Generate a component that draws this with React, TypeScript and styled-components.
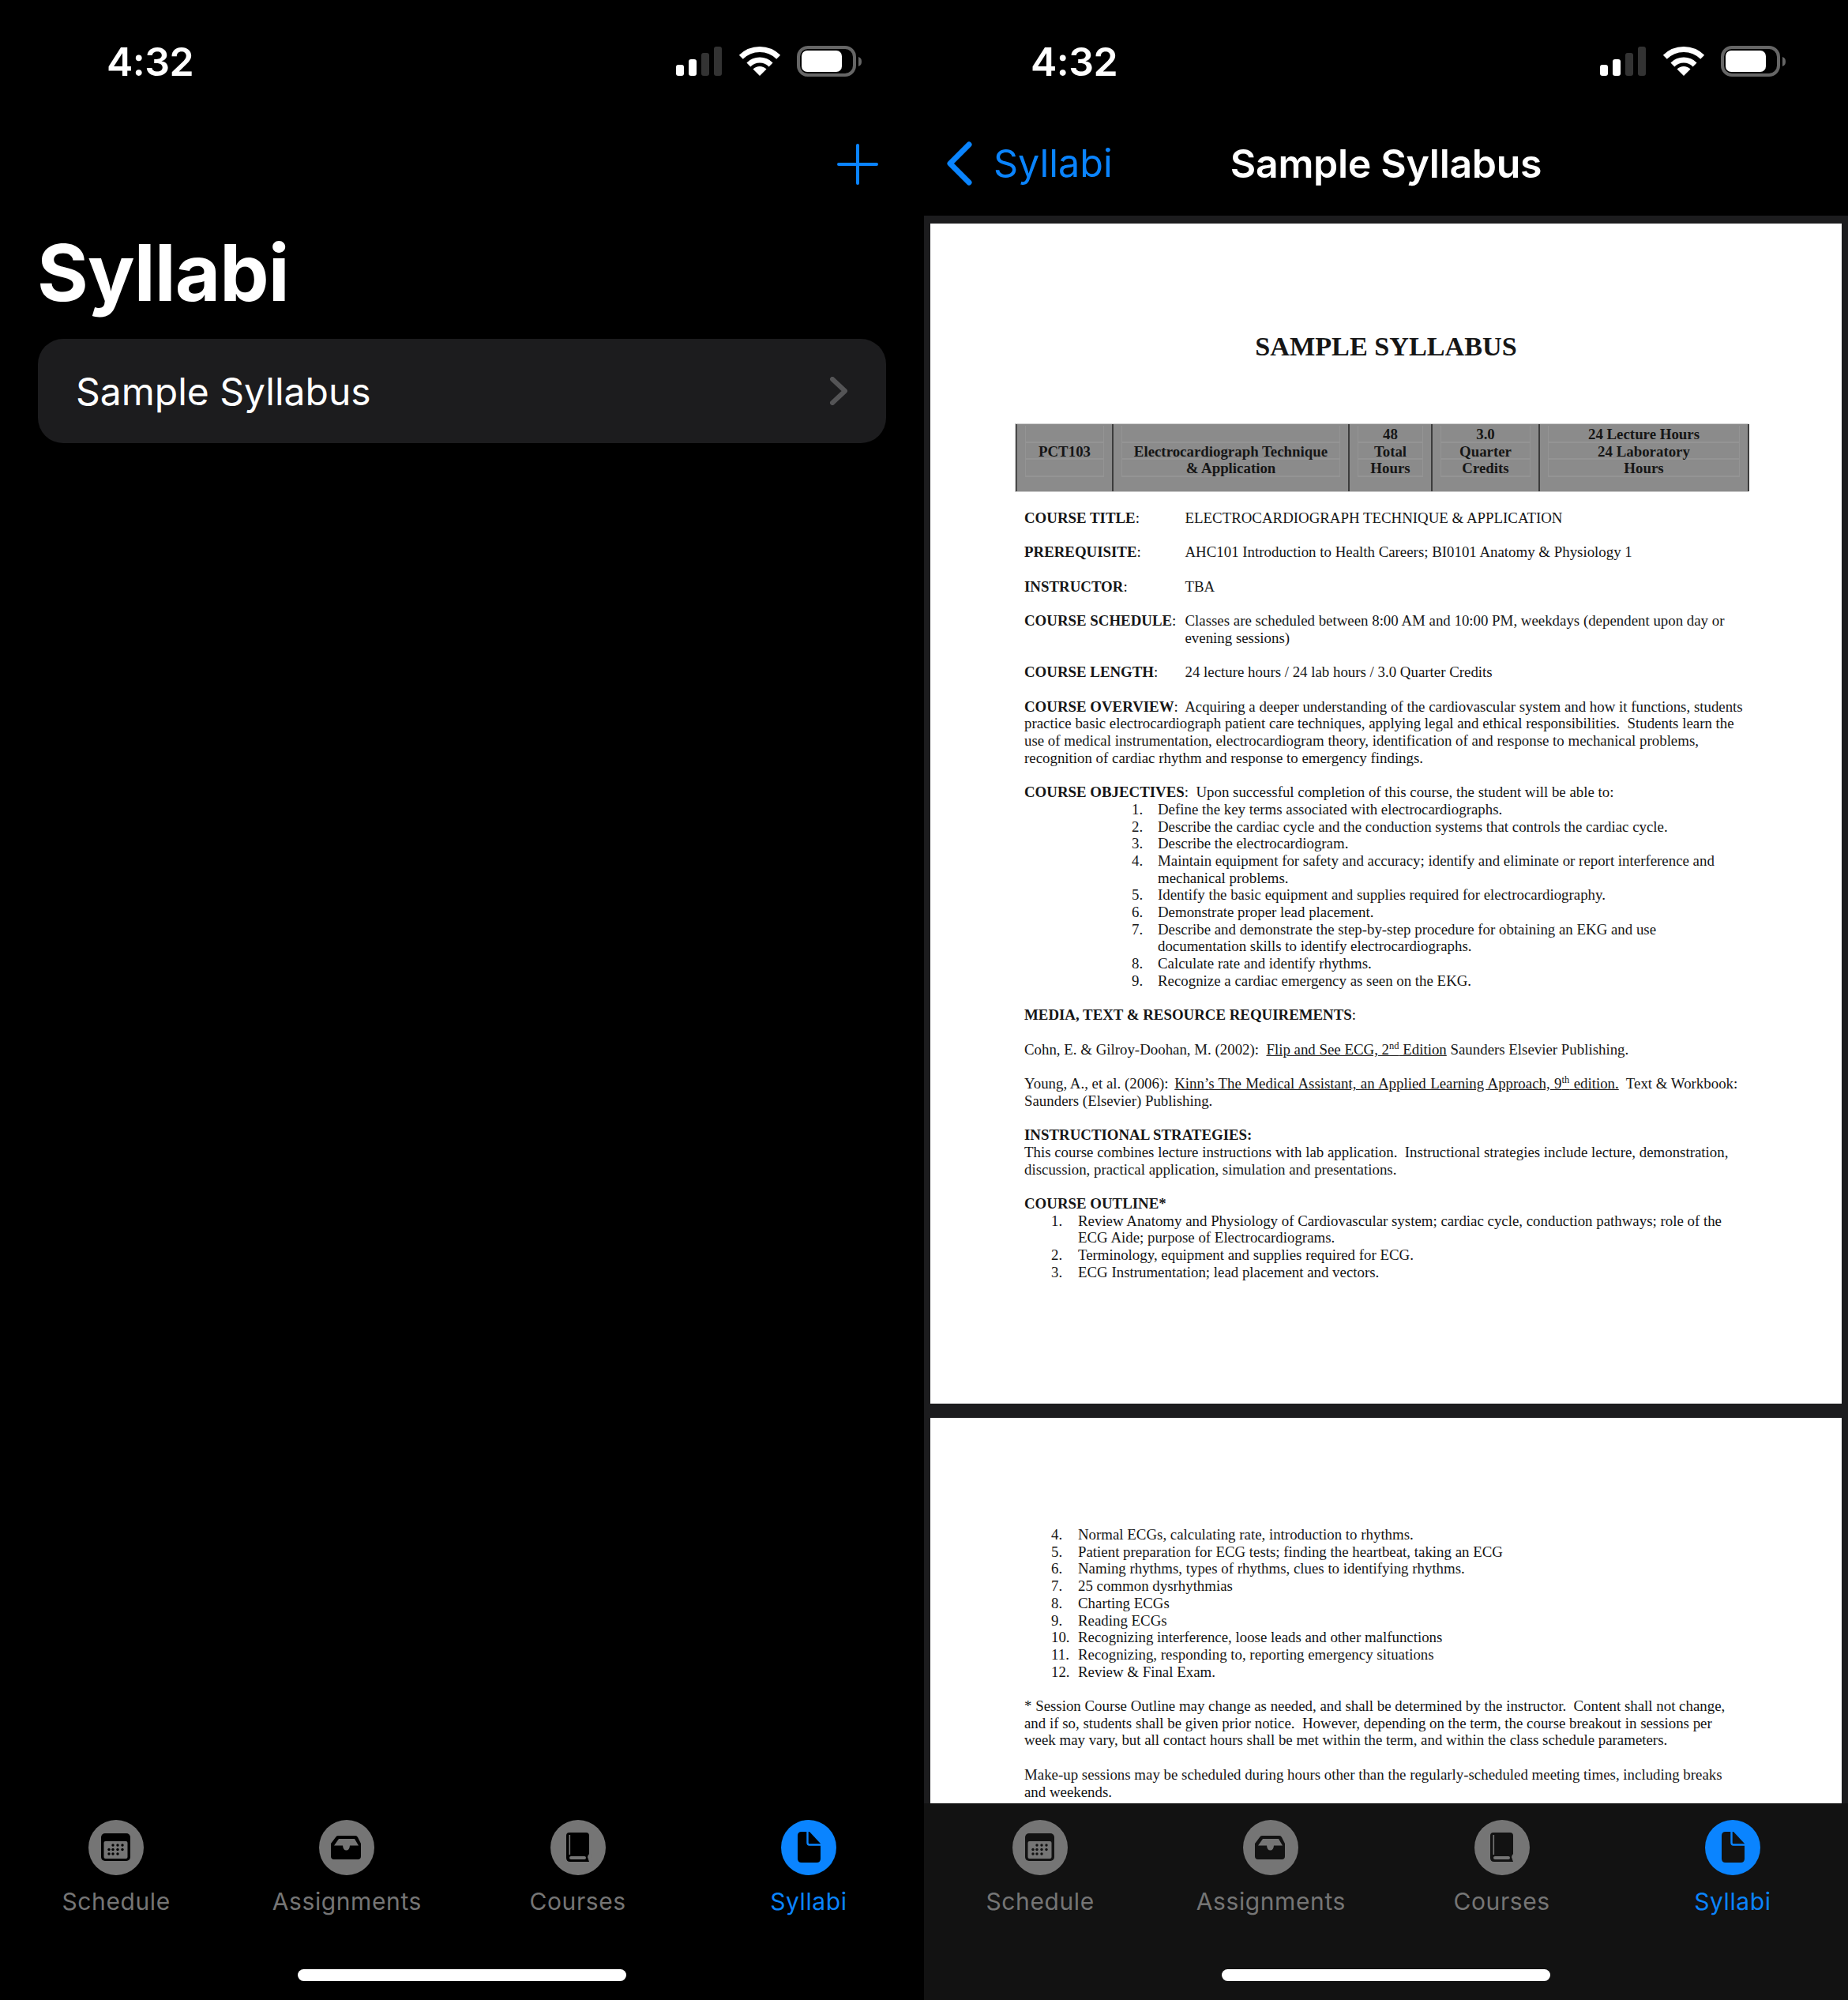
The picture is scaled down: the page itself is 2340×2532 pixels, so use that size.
import React from 'react';
import styled, { createGlobalStyle } from 'styled-components';

const BLUE = '#0a84ff';
const GREY = '#757575';
const SANS = 'Inter, "Liberation Sans", sans-serif';
const SERIF = '"Liberation Serif", "Times New Roman", serif';

const GlobalStyle = createGlobalStyle`
    * { box-sizing: border-box; }
    html, body { margin: 0; padding: 0; background: #000; }
`;

/* Shell */
const Screens = styled.div`
    display: grid;
    grid-template-columns: 1170px 1170px;
    width: 2340px;
    height: 2532px;
    background: #000;
    overflow: hidden;
`;

const Screen = styled.section`
    display: flex;
    flex-direction: column;
    height: 2532px;
    min-width: 0;
    color: #fff;
    font-family: ${SANS};
`;

const StatusBar = styled.div`
    display: flex;
    justify-content: space-between;
    align-items: flex-start;
    height: 97px;
    padding: 58px 78px 0 135px;
`;

const Time = styled.span`
    font-size: 50px;
    font-weight: 600;
    line-height: 40px;
    letter-spacing: -0.5px;
`;

const NavBar = styled.header`
    height: 176px;
    padding: 77px 58px 33px 28px;
`;

const PlusRow = styled(NavBar)`
    display: flex;
    justify-content: flex-end;
    padding-top: 85px;
`;

const DetailNav = styled(NavBar)`
    display: grid;
    grid-template-columns: 1fr auto 1fr;
    align-items: center;
    padding-right: 28px;
`;

const BackLink = styled.a`
    display: flex;
    align-items: center;
    gap: 27px;
    color: ${BLUE};
    font-size: 48.5px;
    line-height: 66px;
`;

const NavTitle = styled.h2`
    margin: 0;
    font-size: 50px;
    font-weight: 600;
    line-height: 66px;
    letter-spacing: -0.3px;
`;

/* List screen */
const ListBody = styled.main`
    flex: 1;
    padding: 0 48px;
`;

const LargeTitle = styled.h1`
    margin: 0 0 0 -1px;
    height: 156px;
    font-size: 99px;
    font-weight: 700;
    line-height: 144px;
    letter-spacing: -0.9px;
`;

const ListCard = styled.div`
    display: flex;
    justify-content: space-between;
    align-items: center;
    height: 132px;
    padding: 0 49px 0 48px;
    border-radius: 32px;
    background: #1c1c1e;
    font-size: 48px;
`;

/* Document viewer */
const Viewer = styled.main`
    flex: 1;
    min-height: 0;
    overflow: hidden;
    display: flex;
    flex-direction: column;
    gap: 18px;
    padding: 10px 8px 0;
    background: #1c1c1e;
`;

const Page = styled.article<{ $top: number }>`
    flex: none;
    height: 1494px;
    padding-top: ${p => p.$top}px;
    background: #fff;
    color: #161616;
    font-family: ${SERIF};
    font-size: 18.86px;
    line-height: 21.7px;
`;

const DocTitle = styled.h3`
    margin: 0 0 82px;
    height: 32px;
    text-align: center;
    font-size: 34.2px;
    font-weight: 700;
    line-height: 32px;
`;

const InfoTable = styled.div`
    display: grid;
    grid-template-columns: 122px 299px 105px 136px 265px;
    width: 927px;
    height: 85px;
    margin: 0 0 23px 108px;
    background: #8b8b8b;
    border-left: 2px solid #4a4a4a;
    box-shadow: 0 0 0 1px #cfcfcf;
    font-weight: 700;
`;

const InfoCell = styled.div`
    padding: 2px 10px 0;
    border-right: 2px solid #3c3c3c;
`;

const InfoInner = styled.div`
    height: 65px;
    border-left: 1px solid #949494;
    border-right: 1px solid #949494;
`;

const InfoLine = styled.div`
    height: 21.7px;
    text-align: center;
    white-space: nowrap;
    border-bottom: 2px solid #949494;
`;

const DocBody = styled.div`
    padding-left: 119px;
    white-space: pre;
`;

const Para = styled.div`
    margin-bottom: 21.7px;
`;

const Field = styled(Para)`
    display: grid;
    grid-template-columns: 203.5px 1fr;
`;

const Line = styled.div``;

const ListRow = styled.div<{ $number: number; $text: number }>`
    display: grid;
    grid-template-columns: ${p => p.$text - p.$number}px 1fr;
    padding-left: ${p => p.$number}px;
`;

const Under = styled.span<{ $spread?: boolean }>`
    text-decoration: underline;
    margin-left: ${p => (p.$spread ? 3 : 0)}px;
    word-spacing: ${p => (p.$spread ? 0.7 : 0)}px;
`;

const Sup = styled.sup`
    font-size: 12.5px;
    line-height: 0;
`;

/* Tab bar */
const TabBar = styled.nav<{ $bg: string }>`
    display: flex;
    flex-direction: column;
    flex: none;
    height: 249px;
    padding: 21px 0 24px;
    background: ${p => p.$bg};
`;

const Tabs = styled.div`
    display: grid;
    grid-template-columns: repeat(4, 1fr);
    padding-left: 1px;
`;

const Tab = styled.a<{ $active?: boolean }>`
    display: flex;
    flex-direction: column;
    align-items: center;
    gap: 13px;
    color: ${p => (p.$active ? BLUE : GREY)};
    font-size: 30px;
    line-height: 40px;
    letter-spacing: 0.6px;
`;

const HomeBar = styled.div`
    width: 416px;
    height: 15px;
    margin: auto auto 0;
    border-radius: 8px;
    background: #fff;
`;

/* Drawings */
const StatusIcons = () => (
    <svg width = '236' height = '40' viewBox = '0 0 236 40'>
        <rect x = '0' y = '24' width = '10' height = '14' rx = '3' fill = '#fff' />
        <rect x = '16' y = '17' width = '10' height = '21' rx = '3' fill = '#fff' />
        <rect x = '32' y = '9' width = '10' height = '29' rx = '3' fill = '#333' />
        <rect x = '48' y = '1' width = '10' height = '37' rx = '3' fill = '#333' />
        <path d = 'M82.3 14.3A33.5 33.5 0 0 1 129.7 14.3' fill = 'none' stroke = '#fff' strokeWidth = '7' />
        <path d = 'M91.9 23.9A20 20 0 0 1 120.1 23.9' fill = 'none' stroke = '#fff' strokeWidth = '7' />
        <path d = 'M106 38L97.5 29.5A12 12 0 0 1 114.5 29.5Z' fill = '#fff' />
        <rect x = '155' y = '2' width = '71' height = '35' rx = '12' fill = 'none' stroke = '#666' strokeWidth = '4' />
        <rect x = '159' y = '6' width = '51' height = '27' rx = '7' fill = '#fff' />
        <path d = 'M231 14C234 15 235 17 235 20S234 25 231 26Z' fill = '#666' />
    </svg>
);

const PlusIcon = () => (
    <svg width = '52' height = '52' viewBox = '0 0 52 52'>
        <path d = 'M26 2V50M2 26H50' stroke = {BLUE} strokeWidth = '4' strokeLinecap = 'round' />
    </svg>
);

const BackIcon = () => (
    <svg width = '33' height = '56' viewBox = '0 0 33 56'>
        <path d = 'M29 4L5 28L29 52' fill = 'none' stroke = {BLUE} strokeWidth = '7' strokeLinecap = 'round' strokeLinejoin = 'round' />
    </svg>
);

const ChevronIcon = () => (
    <svg width = '23' height = '36' viewBox = '0 0 23 36'>
        <path d = 'M4 3L20 18L4 33' fill = 'none' stroke = '#545456' strokeWidth = '6' strokeLinecap = 'round' strokeLinejoin = 'round' />
    </svg>
);

const CALENDAR_DOTS = [
    [ 31, 32 ], [ 37, 32 ], [ 43, 32 ],
    [ 26, 37.5 ], [ 31, 37.5 ], [ 37, 37.5 ], [ 43, 37.5 ],
    [ 26, 43 ], [ 31, 43 ], [ 37, 43 ],
];

const TabIcon = ({ kind, fill, cut }: { kind: TabKind; fill: string; cut: string }) => (
    <svg width = '70' height = '70' viewBox = '0 0 70 70'>
        <circle cx = '35' cy = '35' r = '35' fill = {fill} />
        {kind === 'schedule' && (
            <>
                <rect x = '16' y = '17' width = '37' height = '35' rx = '5' fill = {cut} />
                <rect x = '19.5' y = '27' width = '30' height = '22' rx = '2' fill = {fill} />
                {CALENDAR_DOTS.map(([ cx, cy ]) => (
                    <circle key = {`${cx}-${cy}`} cx = {cx} cy = {cy} r = '1.7' fill = {cut} />
                ))}
            </>
        )}
        {kind === 'assignments' && (
            <>
                <path d = 'M24 20H46Q48 20 49 22L53 30V46Q53 50 49 50H19Q15 50 15 46V30L21 22Q22 20 24 20Z' fill = {cut} />
                <path d = 'M25 24H45L50 32.5H39Q38.5 38.5 34.5 38.5T30 32.5H19Z' fill = {fill} />
            </>
        )}
        {kind === 'courses' && (
            <>
                <path d = 'M24 16H45Q49 16 49 20V43L47 47L49 53H25Q20 53 20 48V20Q20 16 24 16Z' fill = {cut} />
                <rect x = '23.5' y = '19' width = '1.6' height = '25' fill = {fill} />
                <rect x = '24' y = '46' width = '21' height = '4' rx = '2' fill = {fill} />
                <circle cx = '50' cy = '46' r = '2.5' fill = {fill} />
            </>
        )}
        {kind === 'syllabi' && (
            <>
                <path d = 'M26 15H36L50 30V49Q50 54 45 54H26Q21 54 21 49V20Q21 15 26 15Z' fill = {cut} />
                <path d = 'M33.5 14V29Q33.5 31.5 36 31.5H51' fill = 'none' stroke = {fill} strokeWidth = '2.4' />
            </>
        )}
    </svg>
);

/* Data */
type TabKind = 'schedule' | 'assignments' | 'courses' | 'syllabi';

const TABS: { kind: TabKind; label: string }[] = [
    { kind: 'schedule', label: 'Schedule' },
    { kind: 'assignments', label: 'Assignments' },
    { kind: 'courses', label: 'Courses' },
    { kind: 'syllabi', label: 'Syllabi' },
];

const INFO_COLUMNS = [
    [ '', 'PCT103', '' ],
    [ '', 'Electrocardiograph Technique', '& Application' ],
    [ '48', 'Total', 'Hours' ],
    [ '3.0', 'Quarter', 'Credits' ],
    [ '24 Lecture Hours', '24 Laboratory', 'Hours' ],
];

const OBJECTIVES = [
    [ '1.', 'Define the key terms associated with electrocardiographs.' ],
    [ '2.', 'Describe the cardiac cycle and the conduction systems that controls the cardiac cycle.' ],
    [ '3.', 'Describe the electrocardiogram.' ],
    [ '4.', 'Maintain equipment for safety and accuracy; identify and eliminate or report interference and' ],
    [ '', 'mechanical problems.' ],
    [ '5.', 'Identify the basic equipment and supplies required for electrocardiography.' ],
    [ '6.', 'Demonstrate proper lead placement.' ],
    [ '7.', 'Describe and demonstrate the step-by-step procedure for obtaining an EKG and use' ],
    [ '', 'documentation skills to identify electrocardiographs.' ],
    [ '8.', 'Calculate rate and identify rhythms.' ],
    [ '9.', 'Recognize a cardiac emergency as seen on the EKG.' ],
];

const OUTLINE_START = [
    [ '1.', 'Review Anatomy and Physiology of Cardiovascular system; cardiac cycle, conduction pathways; role of the' ],
    [ '', 'ECG Aide; purpose of Electrocardiograms.' ],
    [ '2.', 'Terminology, equipment and supplies required for ECG.' ],
    [ '3.', 'ECG Instrumentation; lead placement and vectors.' ],
];

const OUTLINE_REST = [
    [ '4.', 'Normal ECGs, calculating rate, introduction to rhythms.' ],
    [ '5.', 'Patient preparation for ECG tests; finding the heartbeat, taking an ECG' ],
    [ '6.', 'Naming rhythms, types of rhythms, clues to identifying rhythms.' ],
    [ '7.', '25 common dysrhythmias' ],
    [ '8.', 'Charting ECGs' ],
    [ '9.', 'Reading ECGs' ],
    [ '10.', 'Recognizing interference, loose leads and other malfunctions' ],
    [ '11.', 'Recognizing, responding to, reporting emergency situations' ],
    [ '12.', 'Review & Final Exam.' ],
];

/* Parts */
const Status = () => (
    <StatusBar>
        <Time>4:32</Time>
        <StatusIcons />
    </StatusBar>
);

const BottomTabs = ({ bg }: { bg: string }) => (
    <TabBar $bg = {bg}>
        <Tabs>
            {TABS.map(({ kind, label }) => (
                <Tab key = {kind} $active = {kind === 'syllabi'}>
                    <TabIcon kind = {kind} fill = {kind === 'syllabi' ? BLUE : GREY} cut = {bg} />
                    {label}
                </Tab>
            ))}
        </Tabs>
        <HomeBar />
    </TabBar>
);

const NumberedList = ({ rows, number, text }: { rows: string[][]; number: number; text: number }) => (
    <>
        {rows.map(([ num, content ]) => (
            <ListRow key = {content} $number = {number} $text = {text}>
                <span>{num}</span>
                <span>{content}</span>
            </ListRow>
        ))}
    </>
);

const FieldRow = ({ label, children }: { label: string; children: React.ReactNode }) => (
    <Field>
        <span><b>{label}</b>:</span>
        <div>{children}</div>
    </Field>
);

const App = () => (
    <>
        <GlobalStyle />
        <Screens>
            <Screen>
                <Status />
                <PlusRow><PlusIcon /></PlusRow>
                <ListBody>
                    <LargeTitle>Syllabi</LargeTitle>
                    <ListCard>
                        Sample Syllabus
                        <ChevronIcon />
                    </ListCard>
                </ListBody>
                <BottomTabs bg = '#000' />
            </Screen>

            <Screen>
                <Status />
                <DetailNav>
                    <BackLink><BackIcon />Syllabi</BackLink>
                    <NavTitle>Sample Syllabus</NavTitle>
                </DetailNav>
                <Viewer>
                    <Page $top = {140}>
                        <DocTitle>SAMPLE SYLLABUS</DocTitle>
                        <InfoTable>
                            {INFO_COLUMNS.map(lines => (
                                <InfoCell key = {lines.join()}>
                                    <InfoInner>
                                        {lines.map((line, i) => <InfoLine key = {i}>{line}</InfoLine>)}
                                    </InfoInner>
                                </InfoCell>
                            ))}
                        </InfoTable>
                        <DocBody>
                            <FieldRow label = 'COURSE TITLE'>ELECTROCARDIOGRAPH TECHNIQUE &amp; APPLICATION</FieldRow>
                            <FieldRow label = 'PREREQUISITE'>AHC101 Introduction to Health Careers; BI0101 Anatomy &amp; Physiology 1</FieldRow>
                            <FieldRow label = 'INSTRUCTOR'>TBA</FieldRow>
                            <FieldRow label = 'COURSE SCHEDULE'>
                                <Line>Classes are scheduled between 8:00 AM and 10:00 PM, weekdays (dependent upon day or</Line>
                                <Line>evening sessions)</Line>
                            </FieldRow>
                            <FieldRow label = 'COURSE LENGTH'>24 lecture hours / 24 lab hours / 3.0 Quarter Credits</FieldRow>
                            <Para>
                                <Line><b>COURSE OVERVIEW</b>:  Acquiring a deeper understanding of the cardiovascular system and how it functions, students</Line>
                                <Line>practice basic electrocardiograph patient care techniques, applying legal and ethical responsibilities.  Students learn the</Line>
                                <Line>use of medical instrumentation, electrocardiogram theory, identification of and response to mechanical problems,</Line>
                                <Line>recognition of cardiac rhythm and response to emergency findings.</Line>
                            </Para>
                            <Para>
                                <Line><b>COURSE OBJECTIVES</b>:  Upon successful completion of this course, the student will be able to:</Line>
                                <NumberedList rows = {OBJECTIVES} number = {136} text = {169} />
                            </Para>
                            <Para><b>MEDIA, TEXT &amp; RESOURCE REQUIREMENTS</b>:</Para>
                            <Para>
                                Cohn, E. &amp; Gilroy-Doohan, M. (2002):  <Under>Flip and See ECG, 2<Sup>nd</Sup> Edition</Under> Saunders Elsevier Publishing.
                            </Para>
                            <Para>
                                <Line>Young, A., et al. (2006): <Under $spread>Kinn’s The Medical Assistant, an Applied Learning Approach, 9<Sup>th</Sup> edition.</Under>  Text &amp; Workbook:</Line>
                                <Line>Saunders (Elsevier) Publishing.</Line>
                            </Para>
                            <Para>
                                <Line><b>INSTRUCTIONAL STRATEGIES:</b></Line>
                                <Line>This course combines lecture instructions with lab application.  Instructional strategies include lecture, demonstration,</Line>
                                <Line>discussion, practical application, simulation and presentations.</Line>
                            </Para>
                            <Para>
                                <Line><b>COURSE OUTLINE*</b></Line>
                                <NumberedList rows = {OUTLINE_START} number = {34} text = {68} />
                            </Para>
                        </DocBody>
                    </Page>
                    <Page $top = {137}>
                        <DocBody>
                            <Para>
                                <NumberedList rows = {OUTLINE_REST} number = {34} text = {68} />
                            </Para>
                            <Para>
                                <Line>* Session Course Outline may change as needed, and shall be determined by the instructor.  Content shall not change,</Line>
                                <Line>and if so, students shall be given prior notice.  However, depending on the term, the course breakout in sessions per</Line>
                                <Line>week may vary, but all contact hours shall be met within the term, and within the class schedule parameters.</Line>
                            </Para>
                            <Para>
                                <Line>Make-up sessions may be scheduled during hours other than the regularly-scheduled meeting times, including breaks</Line>
                                <Line>and weekends.</Line>
                            </Para>
                        </DocBody>
                    </Page>
                </Viewer>
                <BottomTabs bg = '#121212' />
            </Screen>
        </Screens>
    </>
);

export default App;
